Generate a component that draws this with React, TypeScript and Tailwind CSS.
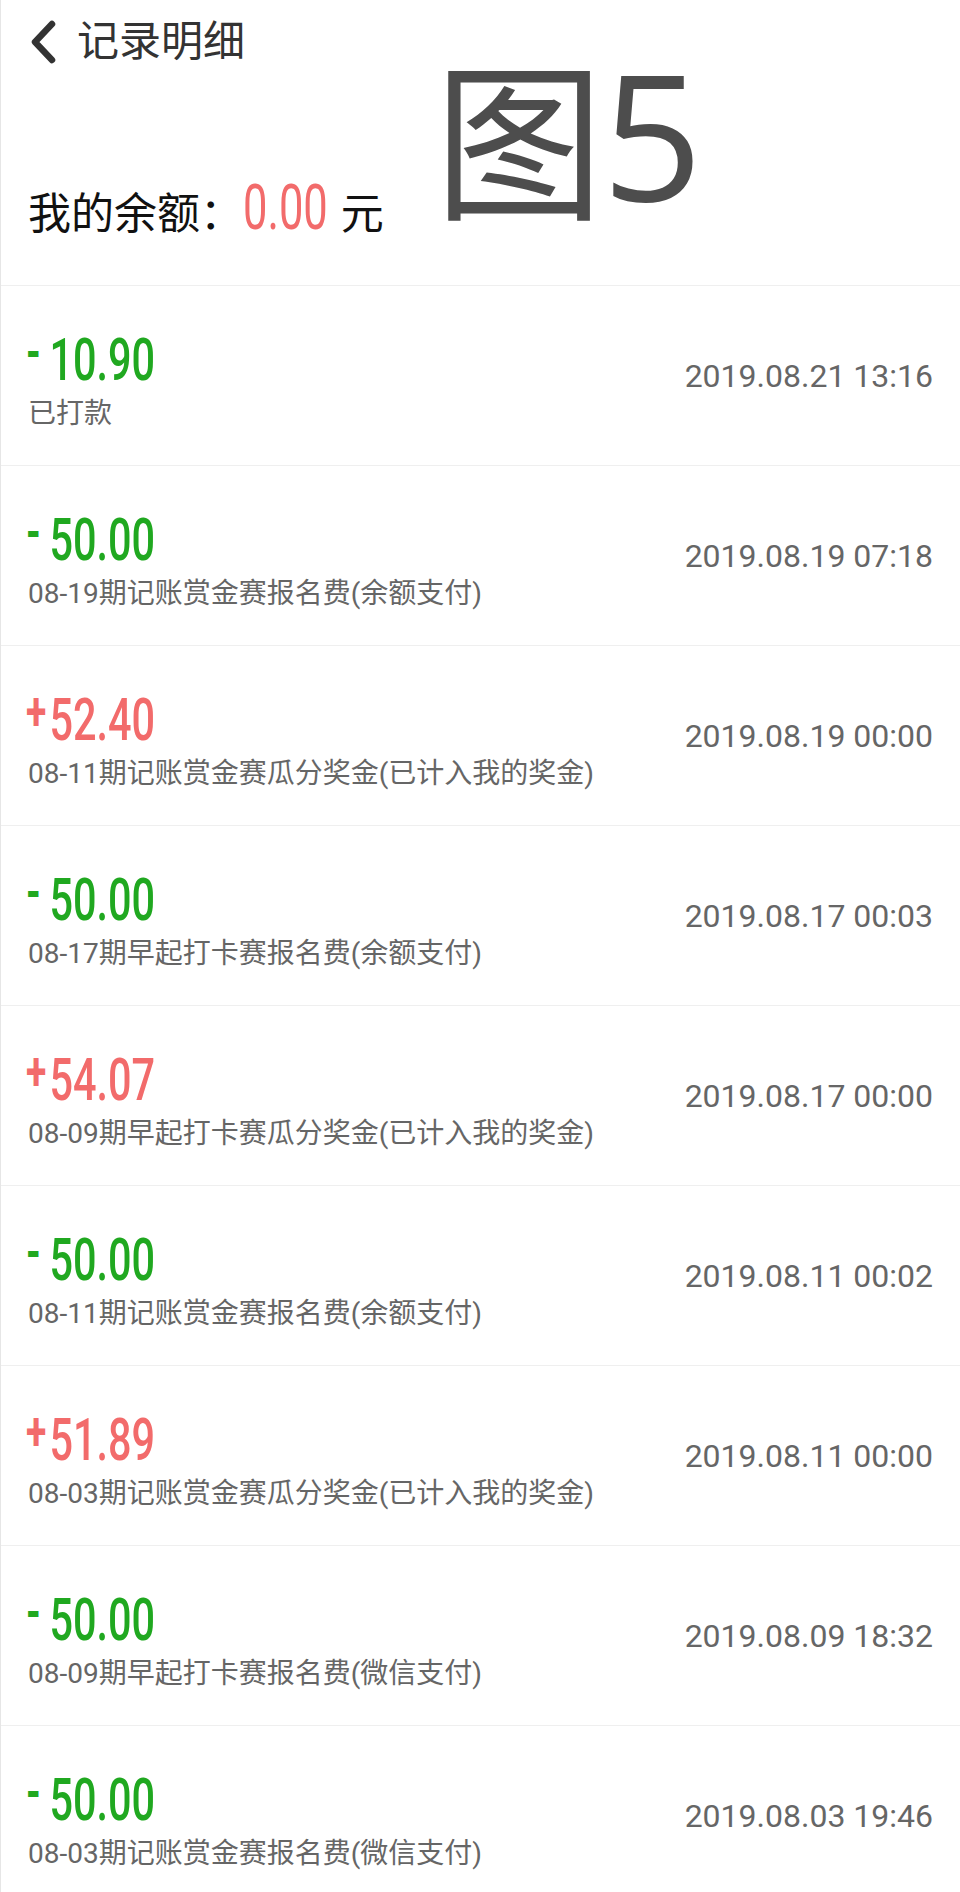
const records = [
  { sign: "-", amount: "10.90", desc: "已打款", time: "2019.08.21 13:16" },
  { sign: "-", amount: "50.00", desc: "08-19期记账赏金赛报名费(余额支付)", time: "2019.08.19 07:18" },
  { sign: "+", amount: "52.40", desc: "08-11期记账赏金赛瓜分奖金(已计入我的奖金)", time: "2019.08.19 00:00" },
  { sign: "-", amount: "50.00", desc: "08-17期早起打卡赛报名费(余额支付)", time: "2019.08.17 00:03" },
  { sign: "+", amount: "54.07", desc: "08-09期早起打卡赛瓜分奖金(已计入我的奖金)", time: "2019.08.17 00:00" },
  { sign: "-", amount: "50.00", desc: "08-11期记账赏金赛报名费(余额支付)", time: "2019.08.11 00:02" },
  { sign: "+", amount: "51.89", desc: "08-03期记账赏金赛瓜分奖金(已计入我的奖金)", time: "2019.08.11 00:00" },
  { sign: "-", amount: "50.00", desc: "08-09期早起打卡赛报名费(微信支付)", time: "2019.08.09 18:32" },
  { sign: "-", amount: "50.00", desc: "08-03期记账赏金赛报名费(微信支付)", time: "2019.08.03 19:46" },
];

const CJK = "font-['Roboto','Noto_Sans_CJK_SC',sans-serif]";

function BackIcon() {
  return (
    <svg width="28" height="44" viewBox="0 0 28 44" className="shrink-0">
      <polyline
        points="23,4 6,22 23,40"
        fill="none"
        stroke="#333333"
        strokeWidth="6.5"
        strokeLinecap="round"
        strokeLinejoin="round"
      />
    </svg>
  );
}

function RecordRow({ record }: { record: (typeof records)[number] }) {
  const color = record.sign === "+" ? "text-[#f26b6b]" : "text-[#20a820]";
  return (
    <div className="flex h-[180px] items-center justify-between border-b border-[#efefef] pl-[27px] pr-[27px]">
      <div className="flex flex-col pt-[10px]">
        <div className={`flex h-[60px] items-start ${color} font-['Roboto',sans-serif]`}>
          <div className="-ml-[2px] flex origin-left scale-x-[0.69] items-start">
            <span className="-mt-[6px] inline-block w-[34px] text-[54px] font-bold leading-[56px]">
              {record.sign}
            </span>
            <span className="text-[60px] font-medium leading-[60px]">{record.amount}</span>
          </div>
        </div>
        <div className={`mt-[6px] text-[28px] leading-[36px] text-[#666666] ${CJK}`}>
          {record.desc}
        </div>
      </div>
      <div className="text-[32px] leading-[40px] text-[#666666] font-['Roboto',sans-serif]">
        {record.time}
      </div>
    </div>
  );
}

export default function App() {
  return (
    <div className="relative min-h-[1892px] w-[960px] overflow-hidden border-l border-[#e6e6e6] bg-white">
      <div className="h-[286px] border-b border-[#efefef]">
        <div className="flex items-center gap-[20px] pl-[28px] pt-[19px]">
          <BackIcon />
          <span className={`text-[42px] leading-[46px] text-[#333333] ${CJK}`}>记录明细</span>
        </div>
        <div className="mt-[118px] flex items-baseline pl-[27px]">
          <span className={`text-[43px] leading-[50px] text-[#111111] ${CJK}`}>我的余额：</span>
          <span className="inline-block origin-left scale-x-[0.69] font-['Roboto',sans-serif] text-[63px] leading-[50px] text-[#f26b6b]">
            0.00
          </span>
          <span className={`-ml-[25px] text-[43px] leading-[50px] text-[#111111] ${CJK}`}>元</span>
        </div>
      </div>

      <div className="absolute left-[433px] top-[48px] flex items-start text-[#4d4d4d]">
        <span className="font-['Noto_Sans_CJK_SC',sans-serif] text-[170px] leading-[170px]">图</span>
        <span className="-ml-[2px] font-['Open_Sans',sans-serif] text-[176px] leading-[170px]">5</span>
      </div>

      {records.map((record, index) => (
        <RecordRow key={index} record={record} />
      ))}
    </div>
  );
}
